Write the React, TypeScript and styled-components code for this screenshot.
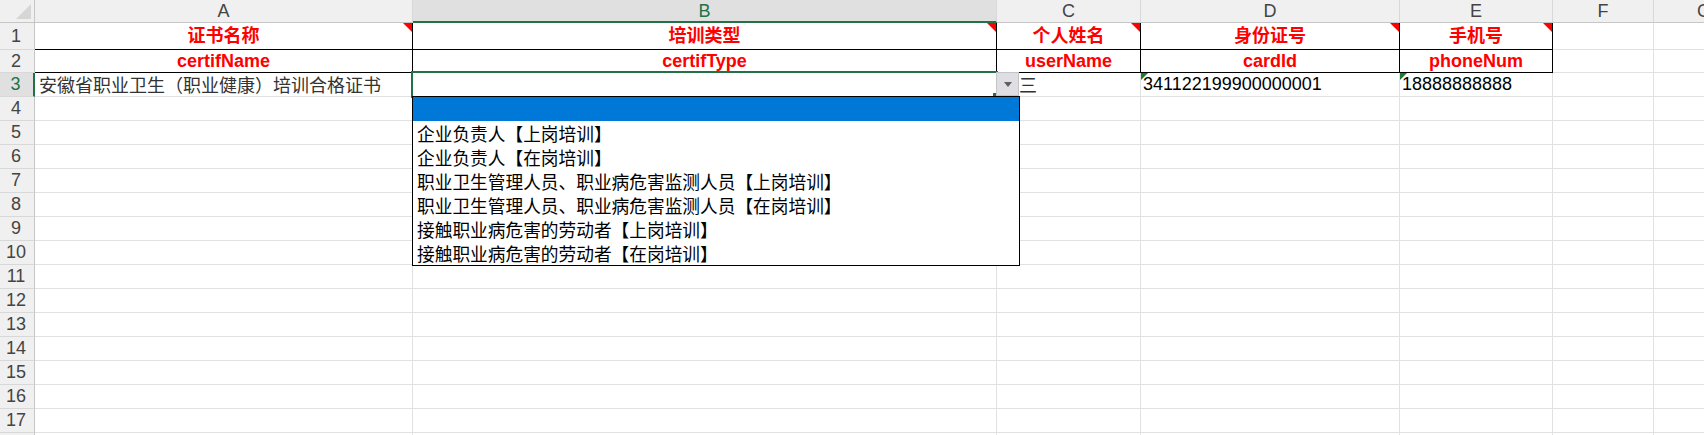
import React from "react";
import styled, { createGlobalStyle, css } from "styled-components";

const GlobalStyle = createGlobalStyle`
  html, body {
    margin: 0;
    padding: 0;
    background: #fff;
    overflow: hidden;
  }
  body {
    font-family: "Liberation Sans", "Noto Sans CJK SC", sans-serif;
  }
`;

const GRID = "#e1e1e1";
const GREEN = "#217346";

const Sheet = styled.div`
  position: relative;
  width: 1704px;
  height: 435px;
  overflow: hidden;
  display: grid;
  grid-template-columns: 35px 378px 584px 144px 259px 153px 101px 101px;
  grid-template-rows: 23px 27px 23px 24px repeat(15, 24px);
  background: #fff;
`;

const Corner = styled.div`
  position: relative;
  box-sizing: border-box;
  background: #f0f0f0;
  border-right: 1px solid #c6c6c6;
  border-bottom: 1px solid #c6c6c6;

  &::after {
    content: "";
    position: absolute;
    right: 3px;
    bottom: 3px;
    width: 0;
    height: 0;
    border-bottom: 15px solid #d6d6d6;
    border-left: 15px solid transparent;
  }
`;

const ColHeader = styled.div<{ $selected?: boolean }>`
  box-sizing: border-box;
  display: flex;
  align-items: center;
  justify-content: center;
  background: ${(p) => (p.$selected ? "#e0e0e0" : "#f0f0f0")};
  color: ${(p) => (p.$selected ? GREEN : "#444")};
  font-size: 18px;
  border-right: 1px solid #d8d8d8;
  border-bottom: ${(p) => (p.$selected ? `2px solid ${GREEN}` : "1px solid #c6c6c6")};
  padding-top: 1px;
`;

const RowHeader = styled.div<{ $selected?: boolean }>`
  box-sizing: border-box;
  display: flex;
  align-items: center;
  justify-content: center;
  background: ${(p) => (p.$selected ? "#e0e0e0" : "#f0f0f0")};
  color: ${(p) => (p.$selected ? GREEN : "#444")};
  font-size: 18px;
  border-bottom: 1px solid #d8d8d8;
  border-right: ${(p) => (p.$selected ? `2px solid ${GREEN}` : "1px solid #c6c6c6")};
  padding-right: 2px;
`;

type Kind = "title" | "key" | "serif" | "num" | "plain";

const Cell = styled.div<{ $boxed?: boolean; $kind: Kind; $comment?: boolean; $flag?: boolean }>`
  position: relative;
  box-sizing: border-box;
  display: flex;
  min-width: 0;
  white-space: nowrap;
  border-right: 1px solid ${(p) => (p.$boxed ? "#000" : GRID)};
  border-bottom: 1px solid ${(p) => (p.$boxed ? "#000" : GRID)};
  font-size: 18px;
  line-height: 22px;

  ${(p) =>
    (p.$kind === "title" || p.$kind === "key") &&
    css`
      align-items: center;
      justify-content: center;
      color: #ff0000;
      font-weight: 700;
      font-family: "Liberation Sans", "Noto Sans CJK SC", sans-serif;
    `}

  ${(p) =>
    p.$kind === "serif" &&
    css`
      align-items: flex-end;
      padding: 0 0 1px 4px;
      color: #333;
      font-family: "Noto Sans CJK SC", sans-serif;
    `}

  ${(p) =>
    p.$kind === "num" &&
    css`
      align-items: flex-end;
      padding: 0 0 1px 2px;
      color: #000;
    `}

  ${(p) =>
    p.$comment &&
    css`
      &::after {
        content: "";
        position: absolute;
        top: 0;
        right: 0;
        width: 0;
        height: 0;
        border-top: 9px solid #ff0000;
        border-left: 9px solid transparent;
      }
    `}

  ${(p) =>
    p.$flag &&
    css`
      &::before {
        content: "";
        position: absolute;
        top: 0;
        left: 0;
        width: 0;
        height: 0;
        border-top: 7px solid #1f7a2e;
        border-right: 7px solid transparent;
      }
    `}
`;

const Selection = styled.div`
  position: absolute;
  left: 411px;
  top: 71px;
  width: 587px;
  height: 27px;
  box-sizing: border-box;
  border: 2px solid ${GREEN};
  pointer-events: none;
`;

const FillHandle = styled.div`
  position: absolute;
  left: 993px;
  top: 93px;
  width: 4px;
  height: 4px;
  background: ${GREEN};
`;

const DropButton = styled.div`
  position: absolute;
  left: 996px;
  top: 72px;
  width: 23px;
  height: 24px;
  box-sizing: border-box;
  background: #dfdfe3;
  border: 1px solid #c4c4c8;
  display: flex;
  align-items: center;
  justify-content: center;

  &::after {
    content: "";
    width: 0;
    height: 0;
    border-top: 5px solid #5e5e5e;
    border-left: 4px solid transparent;
    border-right: 4px solid transparent;
  }
`;

const DropList = styled.div`
  position: absolute;
  left: 412px;
  top: 96px;
  width: 608px;
  height: 170px;
  box-sizing: border-box;
  background: #fff;
  border: 1px solid #000;
  display: flex;
  flex-direction: column;
`;

const Option = styled.div<{ $active?: boolean }>`
  height: 24px;
  flex: none;
  display: flex;
  align-items: flex-end;
  padding: 0 0 1px 4px;
  box-sizing: border-box;
  background: ${(p) => (p.$active ? "#0078d7" : "transparent")};
  color: #000;
  font-family: "Noto Sans CJK SC", sans-serif;
  font-size: 17.7px;
  line-height: 22px;
  white-space: nowrap;
`;

const letters = ["A", "B", "C", "D", "E", "F", "G"];

type CellData = { text?: string; kind: Kind; boxed?: boolean; comment?: boolean; flag?: boolean };

const titles = ["证书名称", "培训类型", "个人姓名", "身份证号", "手机号"];
const keys = ["certifName", "certifType", "userName", "cardId", "phoneNum"];
const values: CellData[] = [
  { text: "安徽省职业卫生（职业健康）培训合格证书", kind: "serif" },
  { text: "", kind: "plain" },
  { text: "张三", kind: "serif" },
  { text: "341122199900000001", kind: "num", flag: true },
  { text: "18888888888", kind: "num", flag: true },
];

const options = [
  "企业负责人【上岗培训】",
  "企业负责人【在岗培训】",
  "职业卫生管理人员、职业病危害监测人员【上岗培训】",
  "职业卫生管理人员、职业病危害监测人员【在岗培训】",
  "接触职业病危害的劳动者【上岗培训】",
  "接触职业病危害的劳动者【在岗培训】",
];

const cellFor = (row: number, col: number): CellData => {
  if (col < 5) {
    if (row === 1) return { text: titles[col], kind: "title", boxed: true, comment: true };
    if (row === 2) return { text: keys[col], kind: "key", boxed: true };
    if (row === 3) return values[col];
  }
  return { kind: "plain" };
};

export default function App() {
  // row 18 only peeks in by a few pixels at the bottom edge
  const rows = Array.from({ length: 18 }, (_, i) => i + 1);

  return (
    <>
      <GlobalStyle />
      <Sheet>
        <Corner />
        {letters.map((l) => (
          <ColHeader key={l} $selected={l === "B"}>
            {l}
          </ColHeader>
        ))}

        {rows.map((r) => (
          <React.Fragment key={r}>
            <RowHeader $selected={r === 3}>{r < 18 ? r : null}</RowHeader>
            {letters.map((l, c) => {
              const d = cellFor(r, c);
              return (
                <Cell key={l} $kind={d.kind} $boxed={d.boxed} $comment={d.comment} $flag={d.flag}>
                  {d.text}
                </Cell>
              );
            })}
          </React.Fragment>
        ))}

        <Selection />
        <FillHandle />
        <DropButton />
        <DropList>
          <Option $active />
          {options.map((o) => (
            <Option key={o}>{o}</Option>
          ))}
        </DropList>
      </Sheet>
    </>
  );
}
